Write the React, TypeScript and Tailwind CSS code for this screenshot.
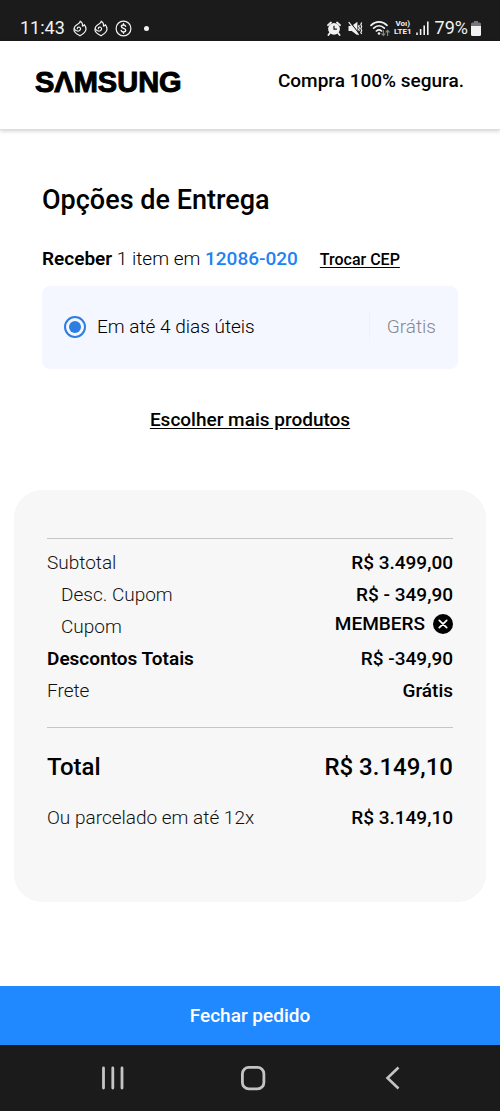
import type { ReactNode } from "react";

function FlameIcon() {
  return (
    <svg width="14" height="17" viewBox="0 0 14 17" fill="none" stroke="#f2f2f2" strokeWidth="1.2" strokeLinecap="round" strokeLinejoin="round" aria-hidden="true">
      <path d="M7.200 1.200C7.300 3 5.800 3.700 4.200 4.500 2.300 5.600.9 7.500 1 9.900c.1 2.900 3.400 4.300 6 5.900 2.700-1.500 5.800-3.400 6-6.500.1-1.800-.6-3.200-1.700-4.600-.4.900-1 1.400-1.900 1.400C9.800 4 9 2.200 7.200 1.200Z" />
      <path d="M1.300 8.800c1 2 3.300 2.700 5 1.900 1.600-.8 1.700-2.900.3-3.500-1.200-.5-2.400.3-2.300 1.500" />
    </svg>
  );
}

function CoinIcon() {
  return (
    <svg width="17" height="17" viewBox="0 0 17 17" fill="none" stroke="#f2f2f2" strokeWidth="1.200" strokeLinecap="round" aria-hidden="true">
      <circle cx="8.500" cy="8.500" r="7.400" />
      <path d="M10.600 6.300c-.3-.9-1.100-1.300-2.100-1.300-1.200 0-2.100.6-2.100 1.600 0 2.300 4.300 1.300 4.300 3.700 0 1.100-1 1.700-2.200 1.700-1.200 0-2-.5-2.300-1.500M8.500 3.700V5M8.500 12v1.300" strokeWidth="1.400" />
    </svg>
  );
}

function AlarmIcon() {
  return (
    <svg width="14" height="15" viewBox="0 0 14 15" aria-hidden="true">
      <path d="M1 4.200 4 1.500M13 4.200 10 1.500M2.900 12 1.400 14M11.100 12l1.500 2" stroke="#f2f2f2" strokeWidth="1.800" strokeLinecap="round" />
      <circle cx="7" cy="7.800" r="5.900" fill="#f2f2f2" />
      <path d="M7 4.700v3.400h2.900" fill="none" stroke="#1b1b1b" strokeWidth="1.200" />
    </svg>
  );
}

function MuteIcon() {
  return (
    <svg width="15" height="15" viewBox="0 0 15 15" fill="none" aria-hidden="true">
      <path d="M.5 5h3.200L9.400.8v13.400L3.700 10H.5Z" fill="#f2f2f2" />
      <path d="M1.600.7 11 12.500" stroke="#1b1b1b" strokeWidth="1.100" />
      <path d="M.7 1.200 10.600 13.900" stroke="#f2f2f2" strokeWidth="1.200" />
      <path d="m11.300 4-.7 1.500.8 1.500-.8 1.500.8 1.500M13.700 1.500l-.9 2 .9 2-.9 2 .9 2-.9 2 .9 1.500" stroke="#f2f2f2" strokeWidth="1.200" />
    </svg>
  );
}

function WifiIcon() {
  return (
    <svg width="20" height="17" viewBox="0 0 20 17" fill="none" strokeLinecap="round" aria-hidden="true">
      <path d="M1 5.300c4.700-4.700 11.300-4.700 16 0M3.700 8.200c3.200-3.100 7.400-3.100 10.600 0M6.400 11c1.600-1.500 3.600-1.500 5.200 0" stroke="#f2f2f2" strokeWidth="1.700" />
      <circle cx="9" cy="13.500" r="1.300" fill="#f2f2f2" />
      <path d="M13.400 10.500v5m-1.600-1.600 1.600 1.600 1.500-1.600M17.600 15.500v-5M16 12l1.600-1.600 1.500 1.600" stroke="#858585" strokeWidth="1.200" />
    </svg>
  );
}

function SignalIcon() {
  return (
    <svg width="13" height="14" viewBox="0 0 13 14" stroke="#f2f2f2" strokeWidth="1.600" aria-hidden="true">
      <path d="M1 11.500V14M4.600 8v6M8.200 4.500V14M11.800.5V14" />
    </svg>
  );
}

function BatteryIcon() {
  return (
    <svg width="10" height="15" viewBox="0 0 10 15" aria-hidden="true">
      <path d="M3 0h4v1.500h1.500Q10 1.500 10 3v2.500H0V3q0-1.500 1.500-1.500H3Z" fill="#777" />
      <path d="M0 5h10v8.500q0 1.500-1.500 1.500h-7Q0 15 0 13.500Z" fill="#f2f2f2" />
    </svg>
  );
}

function StatusBar() {
  return (
    <div className="flex h-[41px] items-end justify-between bg-[#1b1b1b] pr-[19px] pb-1 pl-5 text-[18px] text-[#f2f2f2]">
      <div className="flex h-[18px] items-center">
        <span className="mr-2">11:43</span>
        <span className="flex items-center gap-[7px]">
          <FlameIcon />
          <FlameIcon />
          <CoinIcon />
        </span>
        <span className="ml-3 size-[5px] rounded-full bg-[#f2f2f2]" />
      </div>
      <div className="flex h-[18px] items-center">
        <span className="flex items-center gap-[7px]">
          <AlarmIcon />
          <MuteIcon />
          <WifiIcon />
        </span>
        <span className="ml-1 flex flex-col items-center text-[8px] leading-[8px] font-bold">
          <span>Voı)</span>
          <span>LTE1</span>
        </span>
        <span className="mr-[6px] ml-1"><SignalIcon /></span>
        <span className="mr-[3px]">79%</span>
        <BatteryIcon />
      </div>
    </div>
  );
}

function Row({ label, children, strong, indent }: { label: string; children: ReactNode; strong?: boolean; indent?: boolean }) {
  return (
    <div className="flex h-8 items-center justify-between">
      <dt className={`${strong ? "font-semibold text-black" : "font-light text-[#111]"} ${indent ? "pl-[14px]" : ""}`}>{label}</dt>
      <dd className="font-medium">{children}</dd>
    </div>
  );
}

export default function App() {
  return (
    <div className="flex min-h-screen flex-col bg-white font-['Roboto',sans-serif] text-[19px] leading-6 text-black">
      <StatusBar />
      <header className="flex h-[89px] items-start justify-between border-b border-[#ddd] pt-7 pr-9 pl-[35px] shadow-[0_1px_4px_rgba(0,0,0,0.2)]">
        <a href="#" aria-label="SAMSUNG" className="font-['Liberation_Sans',sans-serif] text-[29px] leading-[26px] font-bold [-webkit-text-stroke:1px_black]">SΛMSUNG</a>
        <p className="font-medium">Compra 100% segura.</p>
      </header>

      <main className="grow">
        <section className="px-[42px] pt-[52px]">
          <h1 className="text-[27px] leading-9 font-medium">Opções de Entrega</h1>
          <div className="mt-[29px] flex items-baseline">
            <p className="font-light"><b className="font-semibold">Receber</b> 1 item em <span className="font-medium text-[#2182f4]">12086-020</span></p>
            <button type="button" className="ml-[22px] text-[16px] font-medium underline underline-offset-2">Trocar CEP</button>
          </div>
          <div className="mt-[14px] flex h-[83px] items-center justify-between rounded-lg bg-[#f4f7ff] px-[22px] pb-[2px]">
            <label className="flex items-center gap-[11px] font-light">
              <input type="radio" name="entrega" defaultChecked className="size-[22px] appearance-none rounded-full border-2 border-[#2e7de1] bg-[#2e7de1] bg-clip-content p-[3px]" />
              Em até 4 dias úteis
            </label>
            <span className="flex h-8 items-center border-l border-[#eef2fb] pl-[17px] font-light text-[#85888f]">Grátis</span>
          </div>
          <div className="mt-[39px] text-center">
            <a href="#" className="font-medium underline underline-offset-2">Escolher mais produtos</a>
          </div>
        </section>

        <section className="mx-[14px] mt-[58px] rounded-[28px] bg-[#f7f7f7] px-[33px] pt-12 pb-[68px]">
          <dl className="border-t border-[#c6c6c6] pt-2">
            <Row label="Subtotal">R$ 3.499,00</Row>
            <Row label="Desc. Cupom" indent>R$ - 349,90</Row>
            <Row label="Cupom" indent>
              <span className="flex items-center gap-2 pb-[6px]">
                MEMBERS
                <button type="button" aria-label="Remover cupom" className="size-5 rounded-full bg-black">
                  <svg width="20" height="20" viewBox="0 0 20 20" stroke="white" strokeWidth="1.700" strokeLinecap="round" aria-hidden="true"><path d="m6.300 6.300 7.400 7.400M13.700 6.300l-7.400 7.400" /></svg>
                </button>
              </span>
            </Row>
            <Row label="Descontos Totais" strong>R$ -349,90</Row>
            <Row label="Frete">Grátis</Row>
          </dl>
          <dl className="mt-5 border-t border-[#c6c6c6] pt-[21px]">
            <div className="flex h-9 items-center justify-between text-[24px] font-medium">
              <dt>Total</dt>
              <dd>R$ 3.149,10</dd>
            </div>
            <div className="mt-[17px]">
              <Row label="Ou parcelado em até 12x">R$ 3.149,10</Row>
            </div>
          </dl>
        </section>
      </main>

      <button type="button" className="h-[59px] w-full bg-[#2189ff] text-[19px] font-medium text-white">Fechar pedido</button>
      <nav className="flex h-[66px] items-center justify-between bg-[#1b1b1b] pr-[93px] pl-[99px]">
        <button type="button" aria-label="Recentes">
          <svg width="28" height="28" viewBox="0 0 28 28" stroke="#c4c4c4" strokeWidth="2.800" strokeLinecap="round"><path d="M4.500 4v20M13.800 4v20M23 4v20" /></svg>
        </button>
        <button type="button" aria-label="Início">
          <svg width="28" height="28" viewBox="0 0 28 28" fill="none" stroke="#c4c4c4" strokeWidth="2.800"><rect x="3.400" y="3.400" width="21.500" height="21.500" rx="6.500" /></svg>
        </button>
        <button type="button" aria-label="Voltar">
          <svg width="28" height="28" viewBox="0 0 28 28" fill="none" stroke="#c4c4c4" strokeWidth="2.600"><path d="M19.500 3.500 8.500 14l11 10.500" /></svg>
        </button>
      </nav>
    </div>
  );
}
